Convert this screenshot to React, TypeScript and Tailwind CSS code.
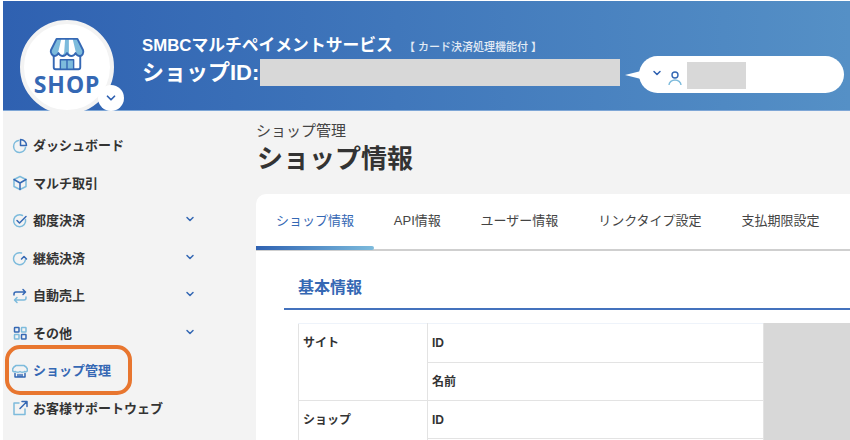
import { ChevronDown } from 'lucide-react';
import type { ReactNode } from 'react';

const stroke = { fill: 'none', strokeWidth: 1.5, strokeLinecap: 'round', strokeLinejoin: 'round' } as const;
const BLUE = '#3568b4';
const LIGHT = '#7dbbdc';

function Ico({ children }: { children: ReactNode }) {
  return (
    <svg viewBox="0 0 16 16" className="w-[16px] h-[16px] shrink-0" {...stroke}>
      {children}
    </svg>
  );
}

function ShopLogo() {
  return (
    <svg viewBox="0 0 40 38" className="w-[38px] h-[36px]" fill="none" strokeLinejoin="round">
      <path d="M6 18v14a2 2 0 0 0 2 2h24a2 2 0 0 0 2-2V18" fill="#fff" stroke={BLUE} strokeWidth="2" />
      <path d="M9 2h22l6 12c1 3-1 6-3.500 6S30 19 29 17c-1 2-3 3-4.500 3S21 19 20 17c-1 2-3 3-4.500 3S12 19 11 17c-1 2-3 3-4.500 3S2 17 3 14z" fill={LIGHT} />
      <path d="M14 2h4l-1 15c-1 2-3 3-5 3-1 0-2-.500-2-1zM22 2h4l4 17c-1 1-2 1-3 1-2 0-4-1-5-3z" fill="#fff" />
      <path d="M9 2h22l6 12c1 3-1 6-3.500 6S30 19 29 17c-1 2-3 3-4.500 3S21 19 20 17c-1 2-3 3-4.500 3S12 19 11 17c-1 2-3 3-4.500 3S2 17 3 14z" stroke={BLUE} strokeWidth="2" />
      <rect x="13" y="24" width="14" height="10" fill={LIGHT} stroke={BLUE} strokeWidth="1.500" />
      <path d="M20 24v10" stroke={BLUE} strokeWidth="1.500" />
    </svg>
  );
}

const icons: Record<string, ReactNode> = {
  dash: (
    <Ico>
      <path d="M6.500 2.500a6 6 0 1 0 7 7" stroke={LIGHT} />
      <path d="M8.500 1.500a6 6 0 0 1 6 6h-6z" stroke={BLUE} />
    </Ico>
  ),
  cube: (
    <Ico>
      <path d="M2 4.500 8 1.500l6 3v7l-6 3-6-3z" stroke={LIGHT} />
      <path d="M2 4.500 8 8l6-3.500M8 8v6.500" stroke={BLUE} />
    </Ico>
  ),
  check: (
    <Ico>
      <path d="M13.500 6.500a6 6 0 1 1-3-4" stroke={LIGHT} />
      <path d="m5 7.500 2.500 2.500L14 3.500" stroke={BLUE} />
    </Ico>
  ),
  cycle: (
    <Ico>
      <path d="M13.500 9.500a6 6 0 1 1-4-6.500" stroke={LIGHT} />
      <path d="m9.500 9 2.500-2.500L14.500 9" stroke={BLUE} />
    </Ico>
  ),
  swap: (
    <Ico>
      <path d="M2 7V6a2 2 0 0 1 2-2h9M11 1.500 13.500 4 11 6.500" stroke={BLUE} />
      <path d="M14 9v1a2 2 0 0 1-2 2H3M5 9.500 2.500 12 5 14.500" stroke={LIGHT} />
    </Ico>
  ),
  grid: (
    <Ico>
      <rect x="2.500" y="2.500" width="4.500" height="4.500" rx="0.500" stroke={BLUE} />
      <rect x="9.500" y="2.500" width="4.500" height="4.500" rx="0.500" stroke={LIGHT} />
      <rect x="2.500" y="9.500" width="4.500" height="4.500" rx="0.500" stroke={LIGHT} />
      <rect x="9.500" y="9.500" width="4.500" height="4.500" rx="0.500" stroke={BLUE} />
    </Ico>
  ),
  shop: (
    <Ico>
      <path d="M4 2.500h8c2 1 3.500 2.500 3.500 4.500 0 1.500-1.500 2-3 1.500-1.500 1-3 1-4.500 0-1.500 1-3 1-4.500 0C2 9 .500 8.500.500 7 .500 5 2 3.500 4 2.500z" stroke={LIGHT} />
      <path d="M3 10.500V14h10v-3.500M6 14v-2.500M8 14v-2.500M10 14v-2.500" stroke={BLUE} />
    </Ico>
  ),
  ext: (
    <Ico>
      <path d="M7 3H2v11.500h11V9" stroke={LIGHT} />
      <path d="M8 8.500 14.500 2M10 1.500h5v5" stroke={BLUE} />
    </Ico>
  ),
};

const nav = [
  { icon: 'dash', label: 'ダッシュボード' },
  { icon: 'cube', label: 'マルチ取引' },
  { icon: 'check', label: '都度決済', more: true },
  { icon: 'cycle', label: '継続決済', more: true },
  { icon: 'swap', label: '自動売上', more: true },
  { icon: 'grid', label: 'その他', more: true },
  { icon: 'shop', label: 'ショップ管理', active: true },
  { icon: 'ext', label: 'お客様サポートウェブ' },
];

const tabs = ['ショップ情報', 'API情報', 'ユーザー情報', 'リンクタイプ設定', '支払期限設定'];

export default function App() {
  return (
    <div
      className="relative w-[850px] h-[440px] overflow-hidden bg-white pl-[3px] pt-px text-[#333]"
      style={{ fontFamily: '"Liberation Sans", "Noto Sans CJK JP", sans-serif' }}
    >
      {/* HEADER */}
      <header className="relative z-10 h-[110px] flex bg-gradient-to-r from-[#2f61b1] to-[#5590c6] border-b border-[#7ea6d6]">
        <div className="absolute left-[17px] top-[19px] w-[94px] h-[94px] rounded-full bg-white border-[4px] border-[#f3f3f3] flex flex-col items-center pt-[13px]">
          <ShopLogo />
          <span className="font-['Noto_Sans'] text-[23px] leading-[22px] tracking-[1px] font-bold text-[#3568b4] whitespace-nowrap">SHOP</span>
          <span className="absolute left-[74px] top-[61px] w-[26px] h-[26px] rounded-full bg-white flex items-center justify-center">
            <ChevronDown size={14} strokeWidth={3} color="#2f61b1" />
          </span>
        </div>

        <div className="ml-[139px] pt-[34px] text-white font-bold">
          <div className="flex items-baseline h-[22px]">
            <span className="text-[16.800px] leading-[22px] w-[251px] whitespace-nowrap">SMBCマルチペイメントサービス</span>
            <span className="text-[11px] leading-[22px] font-medium text-white/85 ml-[11px] whitespace-nowrap">【 カード決済処理機能付 】</span>
          </div>
          <div className="flex items-center mt-[2px]">
            <span className="text-[22px] leading-[27px] w-[118px] whitespace-nowrap">ショップID:</span>
            <span className="w-[360px] h-[27px] bg-[#d8d8d8]" />
          </div>
        </div>

        <div className="absolute left-[636px] top-[55px] w-[205px] h-[37px] rounded-full bg-white flex items-center pl-[12px]">
          <span className="absolute left-[-14px] top-[15px] w-[16px] h-[8px] bg-white [clip-path:polygon(0_50%,100%_0,100%_100%)]" />
          <ChevronDown size={12} strokeWidth={3} color="#2f61b1" className="mb-[3px]" />
          <svg viewBox="0 0 14 16" className="w-[14px] h-[16px] ml-[5px] mt-[6px]" fill="none" strokeWidth="1.400">
            <circle cx="7" cy="5" r="3" stroke="#3568b4" />
            <path d="M1 15c0-3 3-5 6-5s6 2 6 5" stroke={LIGHT} />
          </svg>
          <span className="w-[59px] h-[27px] bg-[#d8d8d8] ml-[5px] mt-[1px]" />
        </div>
      </header>

      <div className="flex h-[329px] bg-[#f3f3f3]">
        {/* SIDEBAR */}
        <aside className="w-[253px] shrink-0 pt-[16px] pl-[9px]">
          {nav.map((item) => (
            <div key={item.label} className="flex items-center h-[37.500px]">
              {icons[item.icon]}
              <span
                className={`ml-[5px] text-[13px] font-bold whitespace-nowrap ${item.active ? 'text-[#3568b4]' : 'text-[#333]'}`}
              >
                {item.label}
              </span>
              {item.more && (
                <ChevronDown size={12} strokeWidth={3} color="#3568b4" className="absolute left-[184px] mb-[3px]" />
              )}
            </div>
          ))}
        </aside>

        {/* MAIN */}
        <main className="flex-1 min-w-0 pt-[9px]">
          <p className="text-[15px] leading-[21px] text-[#444]">ショップ管理</p>
          <h1 className="text-[26px] leading-[36px] font-bold pl-px text-[#333]">ショップ情報</h1>

          <div className="mt-[17px] h-[300px] bg-white rounded-tl-[10px]">
            <div className="flex h-[57px] gap-[39.800px] pl-[20px] border-b-2 border-[#cfcfcf] relative">
              {tabs.map((tab, i) => (
                <span
                  key={tab}
                  className={`text-[13px] leading-[54px] whitespace-nowrap ${i === 0 ? 'text-[#3568b4]' : 'text-[#444]'}`}
                >
                  {tab}
                </span>
              ))}
              <span className="absolute left-0 bottom-[-1px] w-[118px] h-[4px] rounded-r-sm bg-gradient-to-r from-[#2f61b1] to-[#7dbbdc]" />
            </div>

            <div className="pl-[28px] pt-[22px]">
              <h2 className="text-[16px] leading-[30px] font-bold text-[#3568b4] pl-[14px] h-[37px] border-b-2 border-[#4472bd]">
                基本情報
              </h2>
              <div className="flex ml-[14px] mt-[13px] text-[12px] font-bold text-[#333]">
                <table className="w-[467px] border-collapse table-fixed">
                  <colgroup>
                    <col className="w-[129px]" />
                    <col />
                  </colgroup>
                  <tbody>
                    <tr className="h-[39px]">
                      <td rowSpan={2} className="border border-[#e3e3e3] border-t-[#eef3fa] align-top pl-[4px] pt-[10px]">サイト</td>
                      <td className="border border-[#e3e3e3] border-t-[#eef3fa] pl-[4px]">ID</td>
                    </tr>
                    <tr className="h-[38px]">
                      <td className="border border-[#e3e3e3] pl-[4px]">名前</td>
                    </tr>
                    <tr className="h-[38px]">
                      <td rowSpan={2} className="border border-[#e3e3e3] align-top pl-[4px] pt-[10px]">ショップ</td>
                      <td className="border border-[#e3e3e3] pl-[4px]">ID</td>
                    </tr>
                    <tr className="h-[38px]">
                      <td className="border border-[#e3e3e3] pl-[4px]" />
                    </tr>
                  </tbody>
                </table>
                <div className="w-[86px] h-[153px] bg-[#d8d8d8]" />
              </div>
            </div>
          </div>
        </main>
      </div>

      {/* ORANGE HIGHLIGHT */}
      <div className="absolute left-[5px] top-[345px] w-[127px] h-[50px] rounded-[15px] border-[4px] border-[#e8762f]" />
    </div>
  );
}
